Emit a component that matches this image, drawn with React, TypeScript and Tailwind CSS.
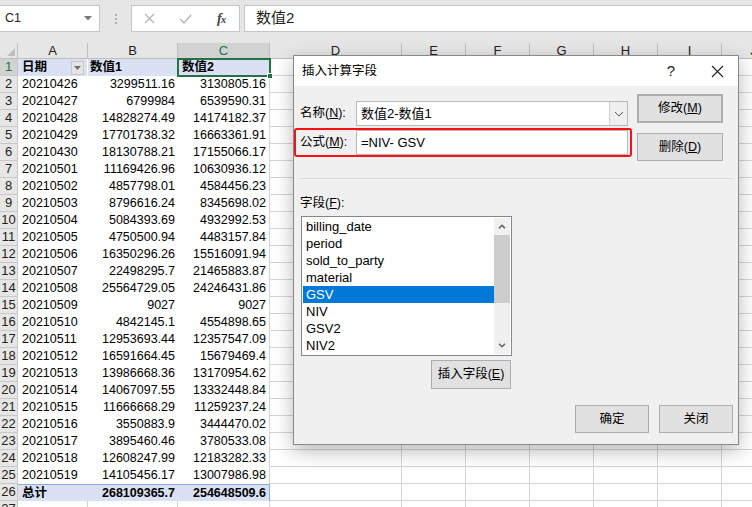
import clsx from "clsx";

const FONT = "font-['Liberation_Sans','Noto_Sans_CJK_SC',sans-serif]";

const data: [string, string, string][] = [
  ["20210426", "3299511.16", "3130805.16"],
  ["20210427", "6799984", "6539590.31"],
  ["20210428", "14828274.49", "14174182.37"],
  ["20210429", "17701738.32", "16663361.91"],
  ["20210430", "18130788.21", "17155066.17"],
  ["20210501", "11169426.96", "10630936.12"],
  ["20210502", "4857798.01", "4584456.23"],
  ["20210503", "8796616.24", "8345698.02"],
  ["20210504", "5084393.69", "4932992.53"],
  ["20210505", "4750500.94", "4483157.84"],
  ["20210506", "16350296.26", "15516091.94"],
  ["20210507", "22498295.7", "21465883.87"],
  ["20210508", "25564729.05", "24246431.86"],
  ["20210509", "9027", "9027"],
  ["20210510", "4842145.1", "4554898.65"],
  ["20210511", "12953693.44", "12357547.09"],
  ["20210512", "16591664.45", "15679469.4"],
  ["20210513", "13986668.36", "13170954.62"],
  ["20210514", "14067097.55", "13332448.84"],
  ["20210515", "11666668.29", "11259237.24"],
  ["20210516", "3550883.9", "3444470.02"],
  ["20210517", "3895460.46", "3780533.08"],
  ["20210518", "12608247.99", "12183282.33"],
  ["20210519", "14105456.17", "13007986.98"],
];

const extra = [
  { l: "D", w: "w-[132px]" },
  { l: "E", w: "w-[64px]" },
  { l: "F", w: "w-[64px]" },
  { l: "G", w: "w-[64px]" },
  { l: "H", w: "w-[64px]" },
  { l: "I", w: "w-[64px]" },
  { l: "J", w: "w-[64px]" },
];

const fields = ["billing_date", "period", "sold_to_party", "material", "GSV", "NIV", "GSV2", "NIV2"];

function ExtraCells() {
  return (
    <>
      {extra.map((c) => (
        <div key={c.l} className={clsx(c.w, "h-full shrink-0 box-border border-r border-b border-[#d4d4d4]")} />
      ))}
    </>
  );
}

function RowNum({ n, active }: { n: number; active?: boolean }) {
  return (
    <div
      className={clsx(
        "w-[18px] h-full shrink-0 box-border border-r border-b border-[#c8c8c8] flex items-center justify-center text-[13px]",
        active ? "bg-[#d2d2d2] text-[#217346]" : "bg-[#e6e6e6] text-[#222]"
      )}
    >
      {n}
    </div>
  );
}

function FormulaBar() {
  return (
    <div className="h-[43px] bg-[#e6e6e6] flex items-start pt-[5px]">
      <div className="w-[100px] h-[27px] bg-white border border-[#c6c6c6] border-l-0 flex items-center pl-[5px] pr-[7px] text-[12.5px] text-[#222]">
        <span>C1</span>
        <svg className="ml-auto" width="8" height="5" viewBox="0 0 8 5">
          <path d="M0 0 L8 0 L4 4.5 Z" fill="#777" />
        </svg>
      </div>
      <div className="w-[31px] h-[27px] flex flex-col items-center justify-center gap-[2px]">
        <span className="w-[2px] h-[2px] bg-[#b0b0b0]" />
        <span className="w-[2px] h-[2px] bg-[#b0b0b0]" />
        <span className="w-[2px] h-[2px] bg-[#b0b0b0]" />
      </div>
      <div className="w-[109px] h-[27px] bg-white border border-[#c6c6c6] flex items-center">
        <div className="w-[36px] flex justify-center">
          <svg width="11" height="11" viewBox="0 0 11 11">
            <path d="M1 1 L10 10 M10 1 L1 10" stroke="#b4b4b4" strokeWidth="1.3" />
          </svg>
        </div>
        <div className="w-[36px] flex justify-center">
          <svg width="13" height="10" viewBox="0 0 13 10">
            <path d="M1 5 L5 9 L12 1" stroke="#b4b4b4" strokeWidth="1.4" fill="none" />
          </svg>
        </div>
        <div className="w-[36px] flex justify-center">
          <span className="font-['Liberation_Serif',serif] italic font-bold text-[14px] text-[#444] tracking-[-1px]">
            f<span className="text-[11px]">x</span>
          </span>
        </div>
      </div>
      <div className="ml-[4px] flex-1 h-[27px] bg-white border border-[#c6c6c6] border-r-0 flex items-center pl-[11px] text-[15px] text-[#222]">
        数值2
      </div>
    </div>
  );
}

function Sheet() {
  return (
    <div className="text-[12.5px] text-black">
      {/* column headers */}
      <div className="h-[16px] flex">
        <div className="w-[18px] h-full shrink-0 box-border border-r border-b border-[#bfbfbf] bg-[#e6e6e6] flex items-end justify-end p-[2px]">
          <svg width="8" height="8" viewBox="0 0 8 8">
            <path d="M8 0 L8 8 L0 8 Z" fill="#bdbdbd" />
          </svg>
        </div>
        {[
          { l: "A", w: "w-[70px]", on: false },
          { l: "B", w: "w-[90px]", on: false },
          { l: "C", w: "w-[92px]", on: true },
        ]
          .concat(extra.map((e) => ({ ...e, on: false })))
          .map((c) => (
            <div
              key={c.l}
              className={clsx(
                c.w,
                "h-full shrink-0 box-border border-r border-b border-[#bfbfbf] flex items-center justify-center text-[13px]",
                c.on ? "bg-[#d2d2d2] text-[#217346]" : "bg-[#e6e6e6] text-[#222]"
              )}
            >
              {c.l}
            </div>
          ))}
      </div>

      {/* row 1: pivot header */}
      <div className="h-[17px] flex">
        <RowNum n={1} active />
        <div className="w-[70px] h-full shrink-0 box-border border-r border-white bg-[#d9e1f2] font-bold flex items-center pl-[4px] pr-[3px]">
          <span>日期</span>
          <div className="ml-auto w-[13px] h-[14px] box-border border border-[#c8c8c8] bg-[#e4e4e4] flex items-center justify-center">
            <svg width="7" height="4" viewBox="0 0 7 4">
              <path d="M0 0 L7 0 L3.5 4 Z" fill="#6e6e6e" />
            </svg>
          </div>
        </div>
        <div className="w-[90px] h-full shrink-0 box-border border-r border-white bg-[#d9e1f2] font-bold flex items-center pl-[2px]">
          数值1
        </div>
        <div className="w-[92px] h-full shrink-0 box-border bg-[#d9e1f2] font-bold flex items-center pl-[4px] relative">
          数值2
          <div className="absolute -left-[1px] -top-[1px] -right-[1px] -bottom-[1px] border-2 border-[#217346]" />
          <div className="absolute -right-[3px] -bottom-[3px] w-[6px] h-[6px] bg-[#217346] border border-white" />
        </div>
        <ExtraCells />
      </div>

      {data.map((r, i) => (
        <div key={r[0]} className="h-[17px] flex">
          <RowNum n={i + 2} />
          <div className="w-[70px] h-full shrink-0 flex items-center pl-[4px]">{r[0]}</div>
          <div className="w-[90px] h-full shrink-0 flex items-center justify-end pr-[3px]">{r[1]}</div>
          <div className="w-[92px] h-full shrink-0 box-border border-r border-[#d4d4d4] flex items-center justify-end pr-[3px]">
            {r[2]}
          </div>
          <ExtraCells />
        </div>
      ))}

      {/* row 26: total */}
      <div className="h-[17px] flex">
        <RowNum n={26} />
        <div className="w-[70px] h-full shrink-0 box-border border-t border-[#8ea9db] bg-[#d9e1f2] font-bold flex items-center pl-[4px]">
          总计
        </div>
        <div className="w-[90px] h-full shrink-0 box-border border-t border-[#8ea9db] bg-[#d9e1f2] font-bold flex items-center justify-end pr-[3px]">
          268109365.7
        </div>
        <div className="w-[92px] h-full shrink-0 box-border border-t border-r border-[#8ea9db] bg-[#d9e1f2] font-bold flex items-center justify-end pr-[3px]">
          254648509.6
        </div>
        <ExtraCells />
      </div>

      <div className="h-[17px] flex">
        <RowNum n={27} />
        <div className="w-[70px] h-full shrink-0 box-border border-r border-b border-[#d4d4d4]" />
        <div className="w-[90px] h-full shrink-0 box-border border-r border-b border-[#d4d4d4]" />
        <div className="w-[92px] h-full shrink-0 box-border border-r border-b border-[#d4d4d4]" />
        <ExtraCells />
      </div>
    </div>
  );
}

function Btn({ children, className }: { children: React.ReactNode; className?: string }) {
  return (
    <div
      className={clsx(
        "box-border bg-[#e1e1e1] border border-[#adadad] flex items-center justify-center text-[12.5px] text-black",
        className
      )}
    >
      {children}
    </div>
  );
}

function Dialog() {
  return (
    <div className="absolute left-[293px] top-[55px] w-[446px] h-[390px] box-border border border-[#8a8a8a] bg-[#f0f0f0] shadow-[0_6px_18px_rgba(0,0,0,0.28)] text-[12.5px] text-black">
      {/* title bar */}
      <div className="h-[30px] bg-white flex items-center pl-[8px]">
        <span className="text-[12.5px]">插入计算字段</span>
        <div className="ml-auto w-[30px] h-[30px] flex items-center justify-center text-[15px] text-[#222]">?</div>
        <div className="ml-[16px] mr-[6px] w-[30px] h-[30px] flex items-center justify-center">
          <svg width="13" height="13" viewBox="0 0 13 13">
            <path d="M1 1 L12 12 M12 1 L1 12" stroke="#222" strokeWidth="1.1" />
          </svg>
        </div>
      </div>

      {/* top section */}
      <div className="flex">
        <div className="w-[338px]">
          <div className="mt-[15px] h-[25px] flex items-center">
            <div className="w-[62px] pl-[6px]">
              名称(<span className="underline">N</span>):
            </div>
            <div className="w-[272px] h-[25px] box-border bg-white border border-[#b8b8b8] flex items-center">
              <span className="pl-[4px] text-[13px]">数值2-数值1</span>
              <div className="ml-auto w-[18px] h-full box-border border-l border-[#cfcfcf] bg-[#efefef] flex items-center justify-center">
                <svg width="10" height="6" viewBox="0 0 10 6">
                  <path d="M1 1 L5 5 L9 1" stroke="#555" strokeWidth="1" fill="none" />
                </svg>
              </div>
            </div>
          </div>
          <div className="mt-[2px] h-[29px] box-border border-2 border-[#ff1010] rounded-[3px] flex items-center">
            <div className="w-[60px] pl-[4px]">
              公式(<span className="underline">M</span>):
            </div>
            <div className="w-[272px] h-[25px] box-border bg-white border border-[#b8b8b8] flex items-center pl-[4px] text-[13px]">
              =NIV- GSV
            </div>
          </div>
        </div>
        <div className="ml-[5px] w-[86px]">
          <Btn className="mt-[8px] h-[29px] border-2 border-[#0078d7]">
            修改(<span className="underline">M</span>)
          </Btn>
          <Btn className="mt-[10px] h-[28px]">
            删除(<span className="underline">D</span>)
          </Btn>
        </div>
      </div>

      <div className="mt-[17px] ml-[6px] w-[433px] h-[1px] bg-[#d9d9d9]" />

      <div className="mt-[16px] ml-[6px] h-[16px] flex items-center">
        字段(<span className="underline">F</span>):
      </div>

      <div className="mt-[5px] ml-[7px] w-[211px] h-[140px] box-border border border-[#828790] bg-white p-[1px] flex">
        <div className="w-[191px] text-[13px]">
          {fields.map((f) => (
            <div
              key={f}
              className={clsx("h-[17px] flex items-center pl-[3px]", f === "GSV" && "bg-[#0078d7] text-white")}
            >
              {f}
            </div>
          ))}
        </div>
        <div className="ml-auto w-[16px] h-full bg-[#f0f0f0] flex flex-col">
          <div className="h-[17px] flex items-center justify-center">
            <svg width="8" height="5" viewBox="0 0 8 5">
              <path d="M1 4.2 L4 1.2 L7 4.2" stroke="#606060" strokeWidth="1.5" fill="none" />
            </svg>
          </div>
          <div className="h-[68px] bg-[#cdcdcd]" />
          <div className="flex-1" />
          <div className="h-[17px] flex items-center justify-center">
            <svg width="8" height="5" viewBox="0 0 8 5">
              <path d="M1 0.8 L4 3.8 L7 0.8" stroke="#606060" strokeWidth="1.5" fill="none" />
            </svg>
          </div>
        </div>
      </div>

      <Btn className="mt-[4px] ml-[137px] w-[80px] h-[29px]">
        插入字段(<span className="underline">E</span>)
      </Btn>

      <div className="mt-[16px] pr-[5px] flex justify-end gap-[10px]">
        <Btn className="w-[74px] h-[28px]">确定</Btn>
        <Btn className="w-[74px] h-[28px]">关闭</Btn>
      </div>
    </div>
  );
}

export default function App() {
  return (
    <div className={clsx("w-[752px] h-[507px] relative overflow-hidden bg-white", FONT)}>
      <FormulaBar />
      <Sheet />
      <Dialog />
    </div>
  );
}
